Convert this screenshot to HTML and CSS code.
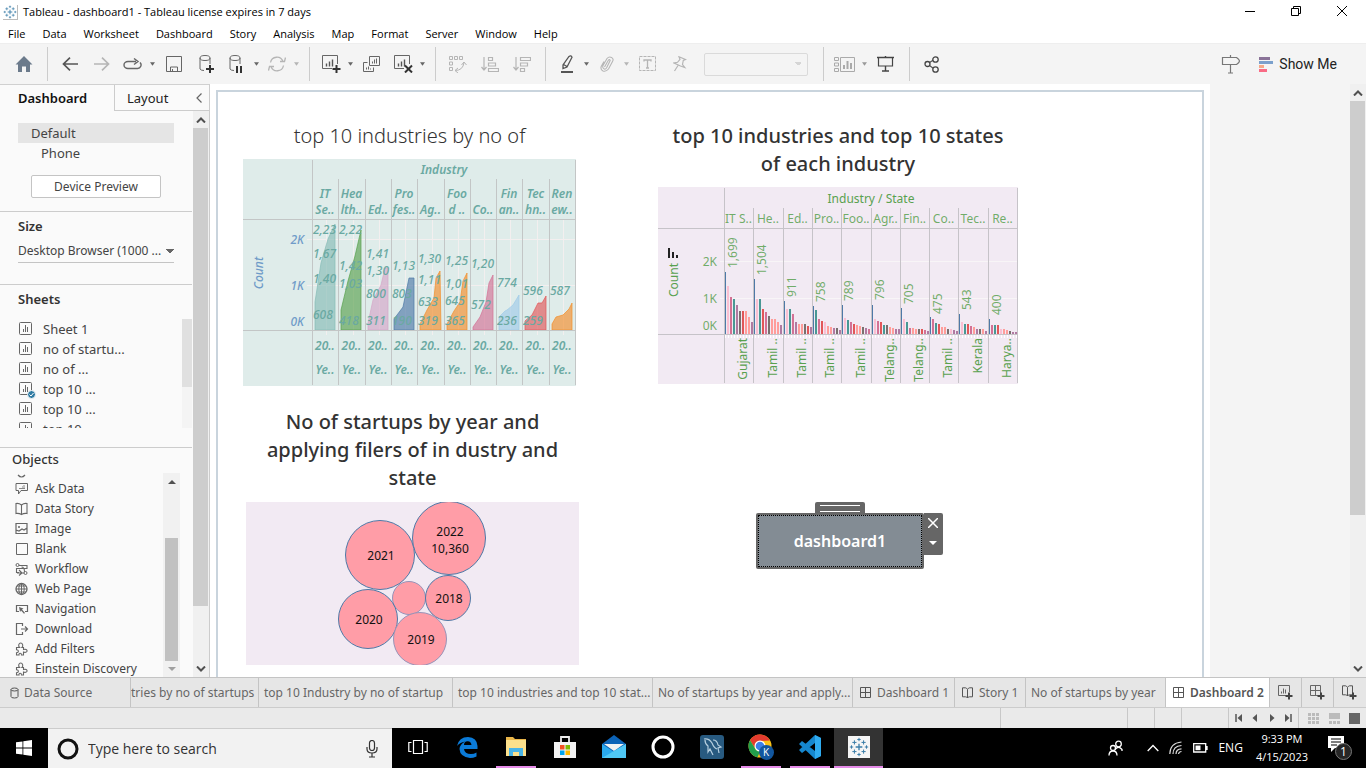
FILE: index.html
```html
<!DOCTYPE html>
<html lang="en">
<head>
<meta charset="utf-8">
<title>Tableau - dashboard1</title>
<link rel="stylesheet" href="styles.css">
</head>
<body>
<svg class="defs" aria-hidden="true">
  <symbol id="tableau" viewBox="0 0 24 24"><g stroke="#3a7da8" stroke-width="1.6"><path d="M12 8v8M8 12h8"/><path stroke-width="1.2" d="M12 1v4M10 3h4M12 19v4M10 21h4M3 10v4M1 12h4M21 10v4M19 12h4M6.500 4v5M4 6.500h5M17.500 4v5M15 6.500h5M6.500 15v5M4 17.500h5M17.500 15v5M15 17.500h5"/></g></symbol>
  <symbol id="caret" viewBox="0 0 6 4"><path d="M0 0h6L3 4z" fill="currentColor"/></symbol>
  <symbol id="sheet" viewBox="0 0 14 14"><rect x=".5" y=".5" width="12" height="12" rx="1" fill="none" stroke="#666"/><path d="M4.500 10V7M6.500 10V3M8.500 10V5" stroke="#666"/></symbol>
  <symbol id="grid" viewBox="0 0 12 12"><path d="M.5.5h10v10H.5zM5.500.5v10M.5 5.500h10" fill="none" stroke="#555"/></symbol>
  <symbol id="book" viewBox="0 0 12 12"><path d="M5.500 2.500v8.500M5.500 2.500Q4.500.8 3.500.8H.5v9h3q1.500 0 2 1.200.5-1.200 2-1.200h3v-9h-3q-1 0-2 1.700" fill="none" stroke="#555"/></symbol>
  <symbol id="puzzle" viewBox="0 0 14 14"><path d="M4.500 5.500Q3.500 4.500 3.700 2.800 4.300 1 5.700 1T7.700 2.800Q8 4.500 7 5.500H8.500v2q2.500-.8 3.500.8.300 1-.5 1.600-1.200.8-3 .2V13H6.500q0-1.700-1.300-1.700T4 13H1.500v-2.300Q3.400 10.500 3.400 9.200T1.500 7.800V5.500z" fill="none" stroke="#666" stroke-width="1.100"/></symbol>
  <symbol id="up" viewBox="0 0 10 6"><path d="M1 5.500l4-4 4 4" fill="none" stroke="#505050" stroke-width="2"/></symbol>
  <symbol id="down" viewBox="0 0 10 6"><path d="M1 .5l4 4 4-4" fill="none" stroke="#505050" stroke-width="2"/></symbol>
</svg>

<header class="titlebar">
  <svg class="app-icon" width="15" height="15"><use href="#tableau"/></svg>
  <span>Tableau - dashboard1 - Tableau license expires in 7 days</span>
  <div class="window-buttons">
    <button aria-label="Minimize"><svg width="10" height="10"><path d="M0 5.500h10" stroke="#000"/></svg></button>
    <button aria-label="Restore"><svg width="10" height="10"><path d="M.5 2.500h7v7h-7zM2.500 2.500v-2h7v7h-2" fill="none" stroke="#000"/></svg></button>
    <button aria-label="Close"><svg width="10" height="10"><path d="M0 0l10 10M10 0L0 10" stroke="#000"/></svg></button>
  </div>
</header>

<nav class="menubar" aria-label="Menu">
  <button>File</button><button>Data</button><button>Worksheet</button><button>Dashboard</button><button>Story</button><button>Analysis</button><button>Map</button><button>Format</button><button>Server</button><button>Window</button><button>Help</button>
</nav>

<div class="toolbar" role="toolbar">
  <button class="home" aria-label="Home"><svg width="18" height="16"><path d="M9 0l8.500 8.500H15V16h-4v-5.500H7V16H3V8.500H.5z" fill="#6b7a8b"/></svg></button>
  <i class="sep"></i>
  <button class="tool" aria-label="Undo"><svg width="16" height="14"><path d="M8 .7L1.500 7 8 13.300M1.500 7H16" fill="none" stroke="#555" stroke-width="1.700"/></svg></button>
  <button class="tool" aria-label="Redo"><svg width="16" height="14"><path d="M8 .7L14.500 7 8 13.300M14.500 7H0" fill="none" stroke="#b5b5b5" stroke-width="1.700"/></svg></button>
  <button class="tool tight" aria-label="Replay"><svg width="19" height="12"><path d="M13 3.500H5a4 3.500 0 000 7h9.500a3.500 3.500 0 002.500-6M11 .5l4 3-4 3" fill="none" stroke="#666" stroke-width="1.400"/></svg></button>
  <button class="arrow" aria-label="Replay options"><svg width="5" height="4"><use href="#caret"/></svg></button>
  <button class="tool" aria-label="Save"><svg width="16" height="16"><path d="M.5.500h15v15H.5zM4.500 15v-4h7v4M6.500 15v-2" fill="none" stroke="#666"/></svg></button>
  <button class="tool" aria-label="New data source"><svg width="15" height="19"><ellipse cx="6" cy="3" rx="5" ry="2.500" fill="none" stroke="#666"/><path d="M1 3v11q1 1.500 4 1.500M11 3v6" fill="none" stroke="#666"/><path d="M11 10v8M7 14h8" stroke="#333" stroke-width="2"/></svg></button>
  <button class="tool tight" aria-label="Pause updates"><svg width="15" height="19"><ellipse cx="6" cy="3" rx="5" ry="2.500" fill="none" stroke="#666"/><path d="M1 3v11q1 1.500 4 1.500M11 3v6" fill="none" stroke="#666"/><path d="M8 11v7M12 11v7" stroke="#333" stroke-width="2"/></svg></button>
  <button class="arrow" aria-label="Pause options"><svg width="5" height="4"><use href="#caret"/></svg></button>
  <button class="tool tight" aria-label="Refresh"><svg width="18" height="16"><path d="M2.500 6.500a6.500 6.500 0 0112.500-1M15.500 9.500a6.500 6.500 0 01-12.500 1M12 5.500h4.500L17.500 1.500M6 10.500H1.500L.5 14.500" fill="none" stroke="#b5b5b5" stroke-width="1.300"/></svg></button>
  <button class="arrow dim" aria-label="Refresh options"><svg width="5" height="4"><use href="#caret"/></svg></button>
  <i class="sep"></i>
  <button class="tool tight" aria-label="New worksheet"><svg width="20" height="18"><path d="M11 13.500H1.500V.5h15V9" fill="none" stroke="#666"/><path d="M5.500 11.500v-3M8.500 11.500v-5M11.500 11.500v-7" stroke="#555" stroke-width="1.400"/><path d="M15.500 10v8M11.500 14h8" stroke="#333" stroke-width="2"/></svg></button>
  <button class="arrow" aria-label="New options"><svg width="5" height="4"><use href="#caret"/></svg></button>
  <button class="tool" aria-label="Duplicate"><svg width="18" height="16"><path d="M6.500.5h10v9h-10zM4.500 6.500h-4v9h10v-4M9.500 7.500v-2M11.500 7.500v-4M13.500 7.500v-5M3.500 13.500v-2M5.500 13.500v-3M7.500 13.500v-1" fill="none" stroke="#666"/></svg></button>
  <button class="tool tight" aria-label="Clear sheet"><svg width="20" height="18"><path d="M11 13.500H1.500V.5h15V9" fill="none" stroke="#666"/><path d="M5.500 11.500v-3M8.500 11.500v-5M11.500 11.500v-7" stroke="#555" stroke-width="1.400"/><path d="M12 10.500l7 7M19 10.500l-7 7" stroke="#333" stroke-width="2"/></svg></button>
  <button class="arrow" aria-label="Clear options"><svg width="5" height="4"><use href="#caret"/></svg></button>
  <i class="sep"></i>
  <button class="tool" aria-label="Swap rows and columns"><svg width="18" height="17"><path d="M.5.5h3v3h-3zM5.500.5h3v3h-3zM10.500.5h3v3h-3zM.5 6h3v3h-3zM.5 11.500h3v3h-3zM6 14.500q8 0 9-8M12.500 9L15 6l2.500 3M9 12l-3 2.500L9 17" fill="none" stroke="#b5b5b5"/></svg></button>
  <button class="tool" aria-label="Sort ascending"><svg width="18" height="15"><path d="M3 0v13M.5 10L3 13l2.500-3M7.500.5h4v3h-4zM7.500 6h7v3h-7zM7.500 11.500h10v3h-10z" fill="none" stroke="#b5b5b5" stroke-width="1.200"/></svg></button>
  <button class="tool" aria-label="Sort descending"><svg width="18" height="15"><path d="M3 0v13M.5 10L3 13l2.500-3M7.500.5h10v3h-10zM7.500 6h7v3h-7zM7.500 11.500h4v3h-4z" fill="none" stroke="#b5b5b5" stroke-width="1.200"/></svg></button>
  <i class="sep"></i>
  <button class="tool tight" aria-label="Highlight"><svg width="14" height="18"><path d="M9 1.500q2-1.500 3 .7L7 12l-4 1.500V10zM3.500 9.500L7 11.500" fill="none" stroke="#555" stroke-width="1.300"/><path d="M1 17h12" stroke="#555" stroke-width="2"/></svg></button>
  <button class="arrow" aria-label="Highlight options"><svg width="5" height="4"><use href="#caret"/></svg></button>
  <button class="tool tight" aria-label="Group"><svg width="14" height="16"><path d="M4.500 11L8.500 4q1.200-1 1.700.5L6.500 12q-1.700 2-3 .5T3 9.500L7 2.500Q9 .2 11.500 1.500T12.500 5.500L8.500 13Q6 16 3 15 .2 13.500 1.200 10.500L4 5.500" fill="none" stroke="#b5b5b5" stroke-width="1.100"/></svg></button>
  <button class="arrow dim" aria-label="Group options"><svg width="5" height="4"><use href="#caret"/></svg></button>
  <button class="tool" aria-label="Show mark labels"><svg width="18" height="16"><path d="M.5.5h16v14H.5z" fill="none" stroke="#b5b5b5" stroke-dasharray="3 1"/><path d="M5 5.500V4h7v1.500M8.500 4v8M7 12h3" fill="none" stroke="#b5b5b5" stroke-width="1.300"/></svg></button>
  <button class="tool" aria-label="Fix axes"><svg width="14" height="16"><path d="M6 .8l6.500 2.700-2.200 1-.8 4 2.300 3-4.300-1.500L1 7l3.500-.7L7 3.300zM5 9.500L1.500 15" fill="none" stroke="#b5b5b5" stroke-width="1.200"/></svg></button>
  <select class="fit" aria-label="Fit" disabled><option></option></select>
  <i class="sep"></i>
  <button class="tool tight" aria-label="Show cards"><svg width="21" height="15"><path d="M.5.500h4v3h-4zM.5 6h4v3h-4zM.5 11.500h4v3h-4zM6.500.500h14v14h-14z" fill="none" stroke="#aaa"/><path d="M10 12V8M13.500 12V4M17 12V6" stroke="#aaa" stroke-width="2"/></svg></button>
  <button class="arrow dark" aria-label="Card options"><svg width="5" height="4"><use href="#caret"/></svg></button>
  <button class="tool" aria-label="Presentation mode"><svg width="18" height="16"><path d="M0 1.500h17M8.500 0v2M8.500 10v5M5 15h7" stroke="#444" stroke-width="1.400"/><path d="M1.500 2v8h14V2" fill="none" stroke="#444" stroke-width="1.200"/></svg></button>
  <i class="sep"></i>
  <button class="tool" aria-label="Share"><svg width="16" height="17"><path d="M4 7.500L11 3M4 8.500l7 5" stroke="#555" stroke-width="1.200"/><g fill="#f4f4f4" stroke="#444" stroke-width="1.300"><circle cx="3.500" cy="8" r="2.500"/><circle cx="11.500" cy="3.500" r="2.700"/><circle cx="11.500" cy="13.500" r="2.700"/></g></svg></button>
  <div class="toolbar-end">
    <button class="tool" aria-label="Guide"><svg width="20" height="19"><path d="M1.500 2.500h14q3 2 3 3.500t-3 3.500h-14zM9.500 0v2.500M9.500 9.500v8M7 18h5" fill="none" stroke="#777" stroke-width="1.200"/></svg></button>
    <button class="show-me"><svg width="15" height="15"><path d="M0 0h11v3H0z" fill="#8a7398"/><path d="M0 4h14v3H0z" fill="#7ba0cc"/><path d="M0 8h5v3H0z" fill="#f5a989"/><path d="M0 12h8v3H0z" fill="#f96b85"/></svg>Show Me</button>
  </div>
</div>

<main class="workspace">
  <aside class="sidebar">
    <div class="side-tabs">
      <button class="side-tab active">Dashboard</button>
      <button class="side-tab">Layout</button>
      <button class="collapse" aria-label="Collapse"><svg width="6" height="10"><path d="M5.500.5L1 5l4.500 4.500" fill="none" stroke="#666" stroke-width="1.200"/></svg></button>
    </div>
    <div class="side-body">
      <div class="side-content">
        <section class="panel device">
          <button class="device-row selected">Default</button>
          <button class="device-row phone">Phone</button>
          <button class="preview">Device Preview</button>
        </section>
        <section class="panel size">
          <h2><label for="size">Size</label></h2>
          <select id="size"><option>Desktop Browser (1000 ...</option></select>
        </section>
        <section class="panel sheets">
          <h2>Sheets</h2>
          <div class="sheet-box">
            <ul>
              <li><svg width="14" height="14"><use href="#sheet"/></svg>Sheet 1</li>
              <li><svg width="14" height="14"><use href="#sheet"/></svg>no of startu...</li>
              <li><svg width="14" height="14"><use href="#sheet"/></svg>no of ...</li>
              <li><svg class="used" width="14" height="14"><use href="#sheet"/><circle cx="12.500" cy="12.500" r="4" fill="#2f7ba3" stroke="#fafafa"/><path d="M10.500 12.500l1.500 1.500 2.500-3" fill="none" stroke="#fff"/></svg>top 10 ...</li>
              <li><svg width="14" height="14"><use href="#sheet"/></svg>top 10 ...</li>
              <li><svg width="14" height="14"><use href="#sheet"/></svg>top 10 ...</li>
            </ul>
            <div class="sheet-track"><i></i></div>
          </div>
        </section>
        <section class="objects">
          <h2>Objects</h2>
          <div class="object-box">
            <ul>
              <li class="cut"><svg width="14" height="6"><path d="M3 2q3.500 4 7 0" fill="none" stroke="#666" stroke-width="1.200"/></svg></li>
              <li><svg width="14" height="14"><path d="M1 1.500h11.500v7H6L3.500 12V8.500H1z" fill="none" stroke="#666"/><path d="M4 6.500h6M7 5h3M8.500 3.500h1" stroke="#888"/></svg>Ask Data</li>
              <li><svg width="14" height="14"><path d="M6.500 3v9.500M6.500 3Q4 1 1 1.500v10q3-.5 5.500 1 2.500-1.500 5.500-1v-10q-3-.5-5.500 1.500" fill="none" stroke="#666" stroke-width="1.100"/></svg>Data Story</li>
              <li><svg width="14" height="14"><path d="M1 1.500h11v10H1zM1 8l3 1 3-2 2 1 3-2" fill="none" stroke="#666" stroke-width="1.200"/><circle cx="4" cy="5" r="1" fill="#666"/></svg>Image</li>
              <li><svg width="14" height="14"><path d="M1.500 1.500h11v11h-11z" fill="none" stroke="#666"/></svg>Blank</li>
              <li><svg width="14" height="14"><path d="M4 3.500h8v3H1.500v4H4M6.500 5q3 0 3 5M2 11h7M4 8l3 3-3 2.500" fill="none" stroke="#666" stroke-width="1.100"/><circle cx="2.500" cy="3" r="1.500" fill="#fafafa" stroke="#666"/><circle cx="10.500" cy="11" r="1.500" fill="#fafafa" stroke="#666"/></svg>Workflow</li>
              <li><svg width="14" height="14"><path d="M6.500 1v12M1 7h11M2 4h9M2 10h9" stroke="#666"/><circle cx="6.500" cy="7" r="5.500" fill="none" stroke="#666" stroke-width="1.300"/><ellipse cx="6.500" cy="7" rx="2.700" ry="5.500" fill="none" stroke="#666"/></svg>Web Page</li>
              <li><svg width="14" height="14"><path d="M4 9.500H1.500v-6h11v6H10" fill="none" stroke="#666" stroke-width="1.200"/><path d="M4 5l4.500 1.500L7 7.500 10 11l-1 .7L6 8.500 5 10z" fill="#666"/></svg>Navigation</li>
              <li><svg width="14" height="14"><path d="M7.500 4V1.500h-6v11h6V10M6 7h6M10 4.500L12.500 7 10 9.500" fill="none" stroke="#666" stroke-width="1.200"/></svg>Download</li>
              <li><svg width="14" height="14"><use href="#puzzle"/></svg>Add Filters</li>
              <li><svg width="14" height="14"><use href="#puzzle"/></svg>Einstein Discovery</li>
            </ul>
            <div class="object-track">
              <svg width="8" height="4"><path d="M0 4h8L4 0z" fill="#505050"/></svg>
              <i></i>
              <svg width="8" height="4"><path d="M0 0h8L4 4z" fill="#a0a0a0"/></svg>
            </div>
          </div>
        </section>
      </div>
      <div class="scrollbar side-scroll"><span><svg width="10" height="6"><use href="#up"/></svg></span><i></i><span class="end"><svg width="10" height="6"><use href="#down"/></svg></span></div>
    </div>
  </aside>

  <div class="stage">
    <div class="page">
      <div class="dashboard">
        <section class="tile">
          <h1 class="light">top 10 industries by no of</h1>
          <svg id="area-chart" class="chart" width="333" height="227" role="img" aria-label="Top 10 industries"></svg>
        </section>
        <section class="tile">
          <h1 class="inset">top 10 industries and top 10 states of each industry</h1>
          <svg id="bar-chart" class="chart" width="360" height="197" role="img" aria-label="Top 10 states of each industry"></svg>
        </section>
        <section class="tile shifted">
          <h1>No of startups by year and applying filers of in dustry and state</h1>
          <svg id="bubble-chart" class="chart" width="333" height="163" role="img" aria-label="Startups by year"></svg>
        </section>
        <section class="nav-cell">
          <div class="nav-object">
            <div class="grip"></div>
            <button class="nav-button">dashboard1</button>
            <div class="nav-tools">
              <button aria-label="Remove"><svg width="10" height="10"><path d="M0 0l10 10M10 0L0 10" stroke="#fff" stroke-width="1.500"/></svg></button>
              <button aria-label="More options"><svg width="8" height="4"><path d="M0 0h8L4 4z" fill="#fff"/></svg></button>
            </div>
          </div>
        </section>
      </div>
    </div>
    <div class="scrollbar stage-scroll"><span><svg width="10" height="6"><use href="#up"/></svg></span><i></i><span class="end"><svg width="10" height="6"><use href="#down"/></svg></span></div>
  </div>
</main>

<nav class="sheet-tabs" aria-label="Sheets">
  <button><svg width="10" height="12"><path d="M1 2.500v7q0 1.500 3.500 1.500T8 9.500v-7M1 2.500Q1 1 4.500 1T8 2.500 4.500 4 1 2.500z" fill="none" stroke="#555"/></svg>Data Source</button>
  <button class="clipped">tries by no of startups</button>
  <button>top 10 Industry by no of startup</button>
  <button>top 10 industries and top 10 stat...</button>
  <button>No of startups by year and apply...</button>
  <button class="iconed"><svg width="12" height="12"><use href="#grid"/></svg>Dashboard 1</button>
  <button class="iconed"><svg width="12" height="12"><use href="#book"/></svg>Story 1</button>
  <button>No of startups by year</button>
  <button class="iconed current"><svg width="12" height="12"><use href="#grid"/></svg>Dashboard 2</button>
  <button class="add" aria-label="New worksheet"><svg width="16" height="15"><path d="M8 10.500H.5V.5h11V7M3.500 8.500v-2M5.500 8.500v-5M7.500 8.500v-4" fill="none" stroke="#666"/><path d="M11 7.500v7M7.500 11h7" stroke="#444" stroke-width="2"/></svg></button>
  <button class="add" aria-label="New dashboard"><svg width="16" height="15"><path d="M.5.500h10v10H.5zM5.500.500v10M.5 5.500h10" fill="none" stroke="#666"/><path d="M11 7.500v7M7.500 11h7" stroke="#444" stroke-width="2"/></svg></button>
  <button class="add" aria-label="New story"><svg width="16" height="15"><use href="#book" width="12" height="12"/><path d="M11 7.500v7M7.500 11h7" stroke="#444" stroke-width="2"/></svg></button>
</nav>

<footer class="status">
  <i></i><i></i><i></i><i></i>
  <div class="pager">
    <button aria-label="First"><svg width="8" height="8"><path d="M1 0v8" stroke="#555" stroke-width="1.500"/><path d="M7 0v8L2.500 4z" fill="#555"/></svg></button>
    <button aria-label="Previous"><svg width="8" height="8"><path d="M6 0v8L1.500 4z" fill="#555"/></svg></button>
    <button aria-label="Next"><svg width="8" height="8"><path d="M2 0v8l4.500-4z" fill="#555"/></svg></button>
    <button aria-label="Last"><svg width="8" height="8"><path d="M7 0v8" stroke="#555" stroke-width="1.500"/><path d="M1 0v8l4.500-4z" fill="#555"/></svg></button>
  </div>
  <div class="views">
    <button aria-label="Sheet sorter"><svg width="11" height="11"><path d="M0 1.500h11M0 5.500h11M0 9.500h11" stroke="#bbb" stroke-width="3" stroke-dasharray="3 1"/></svg></button>
    <button aria-label="Filmstrip"><svg width="11" height="11"><path d="M0 0h11v6H0z" fill="#bbb"/><path d="M0 9.500h11" stroke="#bbb" stroke-width="3" stroke-dasharray="3 1"/></svg></button>
    <button aria-label="Tabs"><svg width="11" height="11"><path d="M0 0h11v11H0z" fill="#666"/></svg></button>
  </div>
</footer>

<div class="taskbar">
  <button class="start" aria-label="Start"><svg width="16" height="16"><path d="M0 2.300l6.500-.9v6.200H0zM7.300 1.300L16 0v7.600H7.300zM0 8.400h6.500v6.200L0 13.700zM7.300 8.400H16V16l-8.700-1.300z" fill="#fff"/></svg></button>
  <div class="search">
    <svg width="22" height="22"><circle cx="11" cy="11" r="9" fill="none" stroke="#111" stroke-width="3"/></svg>
    <input type="text" aria-label="Search" placeholder="Type here to search">
    <svg width="12" height="18"><rect x="3.500" y=".5" width="5" height="10" rx="2.500" fill="none" stroke="#333" stroke-width="1.200"/><path d="M1 7v2q0 4 5 4t5-4V7M6 13v4M3 17h6" fill="none" stroke="#333" stroke-width="1.200"/></svg>
  </div>
  <div class="apps">
    <button class="task" aria-label="Task view"><svg width="20" height="16"><path d="M5.500 1.500h9v13h-9zM3.500 3.500H.8v9h2.700M16.500 3.500h2.700v9h-2.700" fill="none" stroke="#fff" stroke-width="1.200"/></svg></button>
    <button class="task" aria-label="Edge"><svg width="24" height="24"><path d="M2 11Q4 2 13 2q9 .5 9.500 9v3H9q.5 5 7 5 3 0 5.500-1.500v4Q18 23 15 23 5 22 4.500 14 5 9 10 6.500 4.500 7.500 2 11zM9 10h7.500Q16 6 12.500 6.200T9 10z" fill="#0b7bd8" fill-rule="evenodd"/></svg></button>
    <button class="task open" aria-label="File Explorer"><svg width="24" height="24"><path d="M2 2h7l2 2h11v17H2z" fill="#e9b64a"/><path d="M2 5h20v16H2z" fill="#fbe08c"/><path d="M5 21v-8h14v8h-4v-4H9v4z" fill="#48b4e8"/></svg></button>
    <button class="task" aria-label="Store"><svg width="24" height="26"><path d="M8 8V3h8v5" fill="none" stroke="#eee" stroke-width="1.800"/><path d="M1 8h22v16H1z" fill="#f3f3f3"/><path d="M7 11h4.500v4.500H7z" fill="#f25022"/><path d="M12.500 11H17v4.500h-4.500z" fill="#7fba00"/><path d="M7 16.500h4.500V21H7z" fill="#00a4ef"/><path d="M12.500 16.500H17V21h-4.500z" fill="#ffb900"/></svg></button>
    <button class="task" aria-label="Mail"><svg width="26" height="24"><path d="M1 9L13 0l12 9v14H1z" fill="#0c63b7"/><path d="M3 9h20l-10 7z" fill="#f2f2f2"/><path d="M1 9l12 8 12-8v14H1z" fill="#29a9ee"/><path d="M25 9v14H1z" fill="#50c8f5"/></svg></button>
    <button class="task" aria-label="Cortana"><svg width="26" height="26"><circle cx="13" cy="13" r="10" fill="none" stroke="#fff" stroke-width="3"/></svg></button>
    <button class="task" aria-label="MySQL Workbench"><svg width="24" height="24"><rect width="24" height="24" rx="3" fill="#285a80"/><path d="M4 4q5-1 8 4 2 5 5 6M5 5q0 4 3 6v6l2-3 3 6M13 5q4 0 5 5l3 2-3 1 1 5" fill="none" stroke="#b6cfdf" stroke-width="1.200"/></svg></button>
    <button class="task open" aria-label="Chrome"><svg width="28" height="26"><circle cx="13" cy="12" r="11.500" fill="#fbc116"/><path d="M3 6.300A11.500 11.500 0 0123 6.500L13 7 8 14z" fill="#e33b2e"/><path d="M3 6.300L9 16l4 1.500-2.500 5.800A11.500 11.500 0 013 6.300z" fill="#229e4c"/><circle cx="13" cy="12" r="5.500" fill="#fff"/><circle cx="13" cy="12" r="4.300" fill="#3c7fe8"/><circle cx="19.500" cy="18.500" r="7.500" fill="#12569e"/><text x="16" y="22" font-size="10" fill="#fff">K</text></svg></button>
    <button class="task open" aria-label="VS Code"><svg width="24" height="24"><path d="M17 0l6 3v18l-6 3L1 9l3-3 13 10V8L4 18l-3-3z" fill="#1687ce"/><path d="M17 0l6 3v18l-6 3z" fill="#2fabf0"/></svg></button>
    <button class="task open active" aria-label="Tableau"><svg width="22" height="22"><path d="M0 0h22v22H0z" fill="#f5f5f5"/><use href="#tableau" x="1" y="1" width="20" height="20"/></svg></button>
  </div>
  <div class="tray">
    <svg width="16" height="16"><g fill="none" stroke="#fff" stroke-width="1.300"><circle cx="10.500" cy="4" r="2.800"/><path d="M7 9.500q3.500-4.500 7 0v1.500"/><circle cx="5" cy="8" r="2.500"/><path d="M1 15.500q0-4.500 4-4.500t4 4.500"/></g></svg>
    <svg width="12" height="8"><path d="M.7 7L6 1.500 11.300 7" fill="none" stroke="#fff" stroke-width="1.300"/></svg>
    <svg width="14" height="14"><g fill="none" stroke="#ddd" stroke-width="1.200"><path d="M.8 13Q1 2 12.500 1M4 13Q4 5 12.500 4.500M7 13q0-5 5.500-5.200M9.500 13q.5-2.500 3-2.500"/></g></svg>
    <svg width="15" height="10"><path d="M.7.7h12v8.300h-12zM14 3v4" fill="none" stroke="#fff" stroke-width="1.300"/><path d="M2.500 2.500h5v4.700h-5z" fill="#fff"/></svg>
    <span>ENG</span>
    <div class="clock"><span>9:33 PM</span><span>4/15/2023</span></div>
    <button class="notes" aria-label="Notifications"><svg width="26" height="26"><path d="M1 1h16v12H8l-4 4v-4H1z" fill="#fff"/><path d="M4 4h10M4 7h10M4 10h6" stroke="#000" stroke-width="1.200"/><circle cx="16.500" cy="16.500" r="8" fill="#262626" stroke="#777"/><text x="13" y="21" font-size="12" fill="#fff">1</text></svg></button>
  </div>
</div>
<script src="charts.js"></script>
</body>
</html>
```
FILE: styles.css
```css
* { box-sizing: border-box; }
body {
  margin: 0; height: 100vh; display: flex; flex-direction: column; overflow: hidden;
  font-family: "Noto Sans", "Open Sans", sans-serif; font-size: 12px; line-height: 20px; color: #444; background: #fff;
}
button, input, select { font: inherit; color: inherit; background: none; border: 0; padding: 0; margin: 0; border-radius: 0; }
button { display: flex; align-items: center; justify-content: center; white-space: nowrap; }
svg { display: block; flex: none; }
ul { list-style: none; margin: 0; padding: 0; }
h1, h2 { margin: 0; }
.defs { position: absolute; width: 0; height: 0; }

.titlebar { flex: none; height: 24px; display: flex; align-items: center; gap: 5px; padding-left: 3px; font: 11px/16px "Open Sans", sans-serif; color: #000; }
.app-icon { border-right: 1px solid #bbb; border-bottom: 1px solid #bbb; }
.window-buttons { margin-left: auto; display: flex; }
.window-buttons button { width: 46px; height: 24px; padding: 0 2px 3px 0; }
.menubar { flex: none; height: 19px; display: flex; padding-left: 8px; gap: 17px; font: 11px/19px "Open Sans", sans-serif; color: #000; }

.toolbar { flex: none; height: 41px; display: flex; align-items: center; background: #f4f4f4; border-top: 1px solid #eee; }
.home { width: 47px; height: 32px; }
.tool { width: 32px; height: 32px; }
.tight { width: 29px; }
.arrow { width: 11px; height: 32px; color: #666; }
.arrow.dim { color: #b5b5b5; }
.arrow.dark { color: #999; }
.sep { width: 1px; height: 34px; background: #ccc; margin-left: 7px; margin-right: 6px; }
.home + .sep { margin-left: 0; }
.fit {
  width: 104px; height: 23px; margin: 0 8px; border: 1px solid #d0d0d0; border-radius: 2px; appearance: none;
  background: conic-gradient(from -45deg at 50% 100%, #c8c8c8 90deg, transparent 0) no-repeat right 5px center / 8px 4px;
}
.toolbar-end { margin-left: auto; display: flex; align-items: center; gap: 12px; padding-right: 29px; }
.show-me { gap: 5px; font: 14px/20px Roboto, sans-serif; color: #222; }

.workspace { flex: 1; min-height: 0; display: flex; }
.sidebar { flex: none; width: 210px; display: flex; flex-direction: column; background: #fafafa; border-right: 1px solid #ccc; border-top: 1px solid #d0d0d0; }
.side-tabs { flex: none; height: 26px; display: flex; font-size: 13px; color: #222; }
.side-tab { padding: 0 12px; border-left: 1px solid #ccc; border-bottom: 1px solid #ccc; }
.side-tab.active { width: 114px; padding: 0 0 0 18px; justify-content: flex-start; font-weight: 600; border: 0; color: #111; }
.collapse { flex: 1; justify-content: flex-end; padding-right: 7px; border-bottom: 1px solid #ccc; }
.side-body { flex: 1; min-height: 0; display: flex; }
.side-content { flex: 1; min-width: 0; display: flex; flex-direction: column; }
.side-content h2 { font-size: 13px; line-height: 20px; font-weight: 600; color: #333; }
.panel { flex: none; border-bottom: 1px solid #ccc; padding: 0 18px; margin-right: 1px; }
.device { padding-top: 12px; height: 101px; }
.device-row { width: 156px; height: 20px; justify-content: flex-start; padding-left: 13px; font-size: 13px; }
.device-row.selected { background: #e5e5e5; }
.device-row.phone { padding-left: 23px; }
.preview { width: 130px; height: 23px; margin: 12px 0 0 13px; border: 1px solid #c4c4c4; border-radius: 2px; background: #fff; }
.size { height: 73px; padding-top: 4px; }
.size select {
  width: 156px; height: 23px; margin-top: 4px; appearance: none; border-bottom: 1px solid #c4c4c4; outline: 0;
  background: conic-gradient(from -45deg at 50% 100%, #666 90deg, transparent 0) no-repeat right center / 8px 4px;
}
.sheets { height: 163px; padding: 4px 0 0 18px; }
.sheet-box { margin-top: 10px; height: 109px; overflow: hidden; display: flex; justify-content: space-between; font-size: 13px; }
.sheet-box li { height: 20px; display: flex; align-items: center; gap: 10px; padding-left: 1px; }
.used { overflow: visible; }
.sheet-track { width: 10px; background: #f4f4f4; }
.sheet-track i { display: block; height: 68px; background: #e0e0e0; }
.objects { flex: 1; min-height: 0; display: flex; flex-direction: column; padding-left: 12px; }
.side-content .objects h2 { font-weight: 500; padding-top: 1px; }
.object-box { flex: 1; min-height: 0; margin-top: 4px; display: flex; justify-content: space-between; overflow: hidden; padding-right: 13px; }
.object-box li { height: 20px; display: flex; align-items: center; gap: 6px; padding-left: 3px; }
.object-box .cut { height: 6px; }
.object-track { width: 17px; background: #f1f1f1; display: flex; flex-direction: column; align-items: center; padding: 7px 0 6px; }
.object-track i { flex: 1; width: 13px; margin: 54px 0 6px; background: #c1c1c1; }

.scrollbar { flex: none; width: 16px; display: flex; flex-direction: column; background: #f0f0f0; }
.scrollbar span { height: 17px; display: grid; place-items: center; flex: none; }
.scrollbar i { background: #cdcdcd; margin-right: 1px; }
.scrollbar .end { margin-top: auto; }
.side-scroll i { flex: 0 1 478px; }
.stage-scroll i { flex: 0 1 414px; }

.stage { flex: 1; min-width: 0; display: flex; justify-content: space-between; background: #f4f4f4; }
.page { flex: 0 1 1000px; background: #fff; padding: 6px 6px 0; overflow: hidden; }
.dashboard {
  min-height: 800px; border: 2px solid #c9d4dd; padding: 30px 24px 0 25px;
  display: grid; grid-template-columns: 336px 360px; grid-template-rows: auto 1fr; column-gap: 79px; row-gap: 22px;
}
.tile { justify-self: start; }
.tile.shifted { justify-self: end; }
.tile h1 { font-size: 20px; line-height: 28px; font-weight: 500; text-align: center; color: #333; margin-bottom: 9px; }
.tile.shifted h1 { margin-bottom: 10px; }
.tile h1.light { font-weight: 300; }
.tile h1.inset { padding: 0 12px; }
.tile:nth-child(1), .tile:nth-child(3) { width: 333px; }
.chart text { font-family: "Noto Sans", sans-serif; font-size: 12px; }
.nav-cell { padding: 105px 0 0 98px; }
.nav-object { position: relative; display: flex; align-items: flex-start; }
.nav-button { width: 168px; height: 56px; border: 2px solid #666; border-radius: 2px; outline: 1px dotted #000; outline-offset: -3px; background: #838c94; color: #fff; font-size: 16px; font-weight: 600; }
.grip { position: absolute; left: 59px; top: -11px; width: 50px; height: 11px; background: #666; border-radius: 2px 2px 0 0; padding: 3px 5px; }
.grip::before { content: ""; display: block; height: 5px; border-top: 1px solid #fff; border-bottom: 1px solid #fff; }
.nav-tools { width: 19px; height: 42px; background: #666; border-radius: 0 2px 2px 0; }
.nav-tools button { width: 17px; height: 20px; }

.sheet-tabs {
  flex: none; height: 31px; display: grid; background: #e6e6e6; border-top: 1px solid #c4c4c4; border-bottom: 1px solid #ccc; color: #666;
  grid-template-columns: 131px 128px 194px 200px 200px 102px 71px 140px 104px 32px 32px 1fr;
}
.sheet-tabs button { justify-content: flex-start; gap: 5px; padding-left: 5px; border-right: 1px solid #c4c4c4; overflow: hidden; }
.sheet-tabs button:first-child { gap: 4px; padding-left: 10px; }
.sheet-tabs .clipped { padding-left: 0; }
.sheet-tabs .iconed { padding-left: 7px; }
.sheet-tabs .current { background: #fff; color: #555; font-weight: 600; }
.sheet-tabs .add { padding: 0; justify-content: center; }
.sheet-tabs button:last-child { border: 0; }

.status { flex: none; height: 20px; display: flex; justify-content: flex-end; background: #eaeaea; }
.status > i { border-left: 1px solid #c8c8c8; width: 27px; }
.status > i:first-child { width: 127px; }
.status > i:nth-child(4) { width: 47px; }
.pager { display: flex; align-items: center; width: 71px; border-left: 1px solid #c8c8c8; border-right: 1px solid #c8c8c8; justify-content: space-between; padding: 0 6px; }
.views { display: flex; align-items: center; justify-content: space-between; width: 67px; padding: 0 6px 0 9px; }

.taskbar { flex: none; height: 40px; display: flex; background: #000; color: #fff; font-family: "Open Sans", sans-serif; }
.start { width: 48px; }
.search { width: 344px; display: flex; align-items: center; background: #f2f2f2; border-top: 1px solid #ccc; padding: 0 14px 0 9px; gap: 9px; color: #333; }
.search input { flex: 1; min-width: 0; font-size: 14px; outline: 0; }
.search input::placeholder { color: #333; opacity: 1; }
.apps { display: flex; padding-left: 1px; }
.task { width: 49px; border-bottom: 2px solid transparent; }
.open { background: linear-gradient(#e58be8, #e58be8) no-repeat center bottom / 40px 2px border-box; }
.active.task { background-color: #333; border-bottom-color: #e58be8; }
.tray { margin-left: auto; display: flex; align-items: center; padding-right: 13px; font-size: 12px; }
.tray > svg { margin-right: 10px; }
.tray > svg:first-child { margin-right: 23px; }
.clock { display: flex; flex-direction: column; align-items: center; font-size: 11px; line-height: 18px; margin: 0 19px 0 13px; }
```
FILE: charts.js
```js
const NS = 'http://www.w3.org/2000/svg';

function add(parent, name, attrs, text) {
  const node = document.createElementNS(NS, name);
  for (const key in attrs) node.setAttribute(key, attrs[key]);
  if (text !== undefined) node.textContent = text;
  parent.appendChild(node);
  return node;
}

function areaChart() {
  const svg = document.getElementById('area-chart');
  const teal = '#6aa9a2';
  const edges = [69, 95, 122, 148, 174, 201, 227, 253, 279, 306, 332];
  const columns = [
    { head: ['IT', 'Se..'], fill: '#86bcb6', area: '72,171 72,143 78,104 85,80 92,65 92,171', labels: [['2,23', 75], ['1,67', 99], ['1,40', 124], ['608', 160]] },
    { head: ['Hea', 'lth..'], fill: '#59a14f', area: '98,171 98,151 105,122 112,97 118,71 118,171', labels: [['2,22', 75], ['1,42', 111], ['1,03', 129], ['418', 166]] },
    { head: ['', 'Ed..'], fill: '#d4a6c8', area: '125,171 125,164 130,141 138,126 142,109 145,109 145,171', labels: [['1,41', 99], ['1,30', 116], ['800', 139], ['311', 166]] },
    { head: ['Pro', 'fes..'], fill: '#4e79a7', area: '151,171 151,160 160,148 166,119 171,119 171,171', labels: [['1,13', 111], ['803', 139], ['190', 166]] },
    { head: ['', 'Ag..'], fill: '#f28e2b', area: '177,171 177,165 184,151 191,139 193,119 197,112 198,171', labels: [['1,30', 104], ['1,11', 125], ['633', 147], ['319', 166]] },
    { head: ['Foo', 'd ..'], fill: '#f28e2b', area: '204,171 204,165 211,152 217,143 220,122 224,114 224,171', labels: [['1,25', 106], ['1,01', 129], ['645', 146], ['365', 166]] },
    { head: ['', 'Co..'], fill: '#d37295', area: '230,171 230,168 237,158 243,143 246,124 250,116 250,171', labels: [['1,20', 109], ['572', 150]] },
    { head: ['Fin', 'an..'], fill: '#a0cbe8', area: '256,171 256,158 262,152 264,151 270,146 276,136 276,171', labels: [['774', 128], ['236', 166]] },
    { head: ['Tec', 'hn..'], fill: '#e15759', area: '282,171 282,162 289,156 295,144 299,144 303,137 303,171', labels: [['596', 136], ['259', 166]] },
    { head: ['Ren', 'ew..'], fill: '#f28e2b', area: '309,171 309,165 313,158 320,156 326,150 329,144 329,171', labels: [['587', 136]] },
  ];
  add(svg, 'rect', { width: 333, height: 227, fill: '#dfecea' });
  add(svg, 'path', { d: 'M64 80.500H332M64 126.500H332', stroke: '#f3efef' });
  const g = add(svg, 'g', { 'font-style': 'italic', 'font-weight': 600, fill: teal, 'text-anchor': 'middle' });
  add(g, 'text', { x: 201, y: 15 }, 'Industry');
  columns.forEach((c, i) => {
    const mid = (edges[i] + edges[i + 1]) / 2;
    add(svg, 'path', { d: `M${Math.round(mid) + 1.5} 61V176`, stroke: '#f3efef' });
    add(svg, 'polygon', { points: c.area, fill: c.fill, 'fill-opacity': 0.65, stroke: c.fill, 'stroke-opacity': 0.7 });
    if (c.head[0]) add(g, 'text', { x: mid, y: 39 }, c.head[0]);
    add(g, 'text', { x: mid, y: 55 }, c.head[1]);
    add(g, 'text', { x: mid, y: 191 }, '20..');
    add(g, 'text', { x: mid, y: 215 }, 'Ye..');
  });
  const marks = add(svg, 'g', { 'font-style': 'italic', 'font-weight': 500, fill: teal });
  columns.forEach((c, i) => c.labels.forEach(([t, y]) => add(marks, 'text', { x: edges[i] + 1, y }, t)));
  const axis = add(svg, 'g', { 'font-style': 'italic', 'font-weight': 500, fill: '#6f9bc8', 'text-anchor': 'end' });
  [['2K', 85], ['1K', 131], ['0K', 167]].forEach(([t, y]) => add(axis, 'text', { x: 61, y }, t));
  add(axis, 'text', { transform: 'translate(20 114) rotate(-90)', 'text-anchor': 'middle' }, 'Count');
  const lines = edges.map((x, i) => `M${x + 0.5} ${i === 0 || i === 10 ? 1 : 20}V226`).join('');
  add(svg, 'path', { d: lines + 'M0 60.500H332M0 171.500H332', stroke: '#c3c6c6' });
}

function barChart() {
  const svg = document.getElementById('bar-chart');
  const green = '#59a14f';
  const palette = { b: '#4e79a7', p: '#fabfd2', m: '#d37295', t: '#499894', v: '#b07aa1', d: '#79706e', r: '#e15759', s: '#ff9d9a' };
  const edges = [66, 95, 125, 154, 183, 213, 242, 271, 300, 330, 359];
  const columns = [
    ['IT S..', '1,699', 75, 81, 'Gujarat', 85, 'bpmtvdrssv', [62, 48, 37, 35, 29, 23, 23, 23, 17, 12]],
    ['He..', '1,504', 104, 88, 'Tamil ..', 115, 'bptrmdsssv', [55, 35, 35, 25, 22, 18, 15, 15, 12, 9]],
    ['Ed..', '911', 134, 110, 'Tamil ..', 144, 'bptmvssdrv', [33, 25, 25, 20, 12, 10, 10, 10, 8, 7]],
    ['Pro..', '758', 163, 115, 'Tamil ..', 172, 'btmrpssvdv', [28, 24, 15, 13, 12, 8, 7, 6, 6, 4]],
    ['Foo..', '789', 191, 114, 'Tamil ..', 203, 'bptmrssdvm', [29, 16, 14, 12, 10, 9, 8, 7, 6, 5]],
    ['Agr..', '796', 222, 113, 'Telang..', 232, 'bpmrtdssvv', [29, 15, 13, 12, 9, 9, 7, 6, 5, 5]],
    ['Fin..', '705', 251, 117, 'Telang..', 261, 'bptmssdrmv', [26, 15, 12, 6, 6, 5, 5, 5, 4, 3]],
    ['Co..', '475', 280, 127, 'Tamil ..', 290, 'bmtrssdpvv', [17, 15, 11, 10, 7, 7, 5, 5, 4, 3]],
    ['Tec..', '543', 309, 123, 'Kerala', 320, 'bptrmsvdsv', [20, 12, 10, 10, 8, 7, 5, 5, 5, 3]],
    ['Re..', '400', 339, 128, 'Harya..', 349, 'bmtrpssdvv', [15, 9, 9, 9, 5, 5, 4, 3, 2, 2]],
  ];
  add(svg, 'rect', { width: 360, height: 197, fill: '#f2eaf3' });
  add(svg, 'path', { d: 'M62 74.500H359M62 111.500H359', stroke: '#f8f5f7' });
  add(svg, 'path', { d: 'M67 149.500H359', stroke: '#fff', 'stroke-width': 3, 'stroke-dasharray': '1 2' });
  const lines = edges.map((x, i) => `M${x + 0.5} ${i === 0 || i === 10 ? 1 : 21}V196`).join('');
  add(svg, 'path', { d: lines + 'M0 41.500H359M0 147.500H359', stroke: '#c6c3c8' });
  const g = add(svg, 'g', { fill: green });
  add(g, 'text', { x: 213, y: 16, 'text-anchor': 'middle' }, 'Industry / State');
  columns.forEach(([head, value, vx, vy, state, sx, colors, heights], i) => {
    add(g, 'text', { x: (edges[i] + edges[i + 1]) / 2, y: 36, 'text-anchor': 'middle', 'fill-opacity': 0.85 }, head);
    heights.forEach((h, n) => {
      const first = n === 0;
      add(svg, 'rect', { x: edges[i] + (first ? 1 : 3 * n), y: 147 - h, width: first ? 1 : 2, height: h, fill: palette[colors[n]] });
    });
    add(g, 'text', { transform: `translate(${vx + 4} ${vy}) rotate(-90)`, 'fill-opacity': 0.85 }, value);
    add(g, 'text', { transform: `translate(${sx + 4} 151) rotate(-90)`, 'text-anchor': 'end' }, state);
  });
  [['2K', 79], ['1K', 116], ['0K', 143]].forEach(([t, y]) => add(g, 'text', { x: 59, y, 'text-anchor': 'end', 'fill-opacity': 0.85 }, t));
  add(g, 'text', { transform: 'translate(20 93) rotate(-90)', 'text-anchor': 'middle' }, 'Count');
  add(svg, 'path', { d: 'M11 61V71M15 65V71M19 68V71', stroke: '#222', 'stroke-width': 2 });
}

function bubbleChart() {
  const svg = document.getElementById('bubble-chart');
  add(svg, 'rect', { width: 333, height: 163, fill: '#f2eaf3' });
  [
    [203, 36, 36, ['2022', '10,360'], '#4e79a7'],
    [134, 53, 34, ['2021'], '#4e79a7'],
    [163, 96, 16, [], '#9793b8'],
    [202, 96, 22, ['2018'], '#4e79a7'],
    [122, 117, 29, ['2020'], '#4e79a7'],
    [174, 137, 26, ['2019'], '#9793b8'],
  ].forEach(([x, y, r, lines, stroke]) => {
    add(svg, 'circle', { cx: x, cy: y, r: r + 0.5, fill: '#ff9da7', stroke });
    const top = y + 5 - (lines.length - 1) * 7;
    lines.forEach((t, i) => add(svg, 'text', { x: x + 1, y: top + i * 17, 'text-anchor': 'middle', fill: '#111' }, t));
  });
}

areaChart();
barChart();
bubbleChart();
```
